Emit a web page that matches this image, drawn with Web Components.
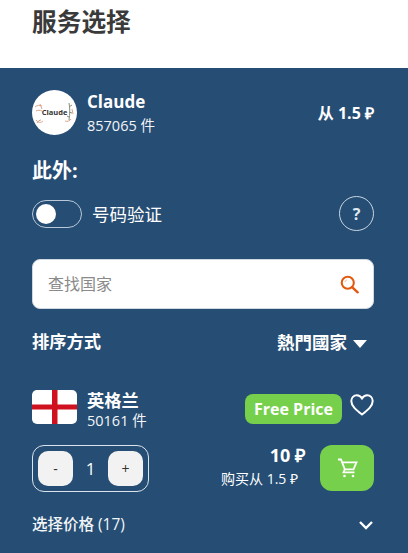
<!DOCTYPE html>
<html lang="zh">
<head>
<meta charset="utf-8">
<title>服务选择</title>
<style>
  html, body {
    margin: 0;
    height: 553px;
    overflow: hidden;
    background: #264d73;
    font-family: "Open Sans", "Noto Sans CJK SC", sans-serif;
  }
</style>
</head>
<body>
<service-page></service-page>

<script>
const FONT = '"Open Sans", "Noto Sans CJK SC", sans-serif';

// white title bar
class PageTitle extends HTMLElement {
    constructor() {
        super();
        this.attachShadow({ mode: 'open' });
        this.shadowRoot.innerHTML = `
            <style>
              :host { display: block; height: 68px; background: #fff; padding: 0 32px; box-sizing: border-box; }
              h1 { margin: 0; padding-top: 6px; font: 700 24.7px/32px ${FONT}; color: #3a3a3a; }
            </style>
            <h1><slot></slot></h1>
        `;
    }
}

// service row with logo, name, count and start price
class ServiceRow extends HTMLElement {
    constructor() {
        super();
        this.attachShadow({ mode: 'open' });
        this.shadowRoot.innerHTML = `
            <style>
              :host { display: flex; align-items: center; height: 45px; }
              .logo { width: 45px; height: 45px; flex: none; }
              .info { margin-left: 10px; flex: 1; padding-top: 4px; }
              .name { font: 700 17px/22px ${FONT}; color: #fff; }
              .count { font: 400 14.500px/25px ${FONT}; color: #f2f5f8; }
              .price { font: 700 16px/22px ${FONT}; color: #fff; }
            </style>
            <svg class="logo" viewBox="0 0 45 45" aria-hidden="true">
              <circle cx="22.5" cy="22.5" r="22.5" fill="#fff"/>
              <g fill="none" stroke-width="1">
                <path d="M3 17c2-2 5-2 7-1M4 21c2-1 4-1 6 0M8 14l2 5M4 30c2 3 5 3 7 1M5 33c1-2 3-3 4-3" stroke="#d9a58f"/>
                <path d="M37 13c1 5 1 11 0 17M37 17l3-2M37 22l3 1M37 27l-2-1" stroke="#8a8f7c"/>
                <path d="M33 31c2 1 5 0 6-2M40 19l1 5" stroke="#d9a58f"/>
              </g>
              <text x="22.5" y="25" text-anchor="middle" font-family="Open Sans, sans-serif" font-size="7.5" font-weight="700" fill="#333">Claude</text>
            </svg>
            <div class="info">
              <div class="name"><slot name="name"></slot></div>
              <div class="count"><slot name="count"></slot></div>
            </div>
            <div class="price"><slot name="price"></slot></div>
        `;
    }
}

// switch with a label and the help button at the far side
class ToggleRow extends HTMLElement {
    constructor() {
        super();
        this.attachShadow({ mode: 'open' });
        this.shadowRoot.innerHTML = `
            <style>
              :host { display: flex; align-items: center; height: 35px; }
              .track {
                width: 50px; height: 28px; box-sizing: border-box; flex: none;
                border: 1px solid #b9c9d9; border-radius: 14px;
                display: flex; align-items: center; padding-left: 3px;
              }
              .knob { width: 20px; height: 20px; border-radius: 50%; background: #fff; }
              .label { margin-left: 10px; flex: 1; font: 400 17.5px/24px ${FONT}; color: #fff; }
              .help {
                width: 35px; height: 35px; box-sizing: border-box; flex: none;
                border: 1px solid #c9d6e3; border-radius: 50%;
                display: flex; align-items: center; justify-content: center;
                font: 700 16px/1 ${FONT}; color: #dfe8f1;
              }
            </style>
            <span class="track"><span class="knob"></span></span>
            <span class="label"><slot></slot></span>
            <span class="help">?</span>
        `;
    }
}

class SearchBox extends HTMLElement {
    constructor() {
        super();
        this.attachShadow({ mode: 'open' });
        this.shadowRoot.innerHTML = `
            <style>
              :host {
                display: flex; align-items: center; height: 50px; box-sizing: border-box;
                background: #fff; border-radius: 8px; border: 1px solid #cfd8e1;
                padding: 0 14px 0 15px;
              }
              .hint { flex: 1; font: 400 16px/22px ${FONT}; color: #8a8a8a; }
              svg { width: 19px; height: 19px; display: block; }
            </style>
            <span class="hint"><slot></slot></span>
            <svg viewBox="0 0 22 22" fill="none" stroke="#e2590f" aria-hidden="true">
              <circle cx="9" cy="9" r="7" stroke-width="2.400"/>
              <path d="M14 14l6.500 6" stroke-width="2.800" stroke-linecap="round"/>
              <path d="M5.600 8.200c.3-1.400 1.300-2.300 2.600-2.600" stroke="#f2b48f" stroke-width="1"/>
            </svg>
        `;
    }
}

class SortRow extends HTMLElement {
    constructor() {
        super();
        this.attachShadow({ mode: 'open' });
        this.shadowRoot.innerHTML = `
            <style>
              :host { display: flex; align-items: center; height: 24px; }
              .label { flex: 1; font: 700 17.3px/24px ${FONT}; color: #fff; }
              .value { font: 700 17.5px/24px ${FONT}; color: #fff; }
              .caret {
                margin: 4px 7px 0 6px; width: 0; height: 0;
                border-left: 7.500px solid transparent; border-right: 7.500px solid transparent;
                border-top: 8px solid #fff;
              }
            </style>
            <span class="label"><slot name="label"></slot></span>
            <span class="value"><slot name="value"></slot></span>
            <span class="caret"></span>
        `;
    }
}

// country card: flag, name, badge, heart, quantity and buy button
class CountryItem extends HTMLElement {
    constructor() {
        super();
        this.attachShadow({ mode: 'open' });
        this.shadowRoot.innerHTML = `
            <style>
              :host { display: block; }
              .top { display: flex; align-items: center; height: 36px; }
              .flag { width: 45px; height: 34px; flex: none; border-radius: 5px; display: block; }
              .info { margin-left: 10px; flex: 1; padding-top: 6px; }
              .name { font: 700 17.3px/22px ${FONT}; color: #fff; }
              .count { font: 400 14.500px/18px ${FONT}; color: #f2f5f8; }
              .badge {
                width: 97px; height: 30px; border-radius: 8px; background: #76d04b;
                display: flex; align-items: center; justify-content: center;
                font: 700 16px/1 ${FONT}; color: #fff; margin-top: 4px;
              }
              .heart { width: 24px; height: 22px; margin-left: 8px; margin-top: -4px; display: block; }
              .bottom { display: flex; align-items: flex-start; margin-top: 20px; }
              .stepper {
                width: 117px; height: 47px; box-sizing: border-box; flex: none;
                border: 1px solid #dbe4ec; border-radius: 12px;
                display: flex; align-items: center; justify-content: space-between; padding: 0 5px;
              }
              .step {
                width: 35px; height: 35px; border-radius: 10px; background: #f2f2f2;
                display: flex; align-items: center; justify-content: center;
                font: 400 14px/1 ${FONT}; color: #333;
              }
              .qty { font: 400 17px/1 ${FONT}; color: #fff; }
              .prices { flex: 1; text-align: right; margin-right: 15px; }
              .amount { font: 700 18px/20px ${FONT}; color: #fff; }
              .from { font: 400 14px/20px ${FONT}; color: #fff; margin-top: 4px; margin-right: 7px; }
              .cart {
                width: 54px; height: 46px; border-radius: 12px; background: #76d04b; flex: none;
                display: flex; align-items: center; justify-content: center;
              }
              .cart svg { width: 21px; height: 21px; display: block; }
            </style>
            <div class="top">
              <svg class="flag" viewBox="0 0 45 34" aria-hidden="true">
                <rect width="45" height="34" fill="#fff"/>
                <rect x="20" width="5.500" height="34" fill="#d0111f"/>
                <rect y="14.500" width="45" height="5" fill="#d0111f"/>
              </svg>
              <div class="info">
                <div class="name"><slot name="name"></slot></div>
                <div class="count"><slot name="count"></slot></div>
              </div>
              <div class="badge"><slot name="badge"></slot></div>
              <svg class="heart" viewBox="0 0 24 22" fill="none" stroke="#fff" stroke-width="2" aria-hidden="true">
                <path d="M12 20.500C6 15.800 1.300 12 1.300 7 1.300 3.700 3.800 1.300 6.800 1.300c2.100 0 4 1.100 5.200 3.100 1.200-2 3.100-3.100 5.200-3.100 3 0 5.500 2.400 5.500 5.700 0 5-4.700 8.800-10.700 13.500z"/>
              </svg>
            </div>
            <div class="bottom">
              <div class="stepper">
                <span class="step">-</span>
                <span class="qty">1</span>
                <span class="step">+</span>
              </div>
              <div class="prices">
                <div class="amount"><slot name="amount"></slot></div>
                <div class="from"><slot name="from"></slot></div>
              </div>
              <div class="cart">
                <svg viewBox="0 0 21 21" fill="none" stroke="#fff" stroke-width="1.800" aria-hidden="true">
                  <path d="M1 1.500h3l3.800 9.800h8.700l3-7H5.400"/>
                  <path d="M7.800 11.300l-1.300 3h11"/>
                  <circle cx="7.500" cy="18" r="1.300" fill="#fff" stroke="none"/>
                  <circle cx="16" cy="18" r="1.300" fill="#fff" stroke="none"/>
                </svg>
              </div>
            </div>
        `;
    }
}

class PriceFooter extends HTMLElement {
    constructor() {
        super();
        this.attachShadow({ mode: 'open' });
        this.shadowRoot.innerHTML = `
            <style>
              :host { display: flex; align-items: center; justify-content: space-between; height: 24px; }
              .label { font: 500 15.500px/24px ${FONT}; color: #f2f5f8; }
              svg { width: 16px; height: 10px; display: block; margin-top: 1px; }
            </style>
            <span class="label"><slot></slot></span>
            <svg viewBox="0 0 16 10" fill="none" stroke="#fff" stroke-width="2.400" aria-hidden="true">
              <path d="M2 2l6 6 6-6"/>
            </svg>
        `;
    }
}

// whole page
class ServicePage extends HTMLElement {
    constructor() {
        super();
        this.attachShadow({ mode: 'open' });
        this.shadowRoot.innerHTML = `
            <style>
              :host { display: block; font-family: ${FONT}; }
              main { background: #264d73; padding: 22px 34px 0 32px; height: 485px; box-sizing: border-box; }
              h2 { margin: 23px 0 0; font: 700 20px/26px ${FONT}; color: #fff; }
              toggle-row { margin-top: 12px; }
              search-box { margin-top: 28px; }
              sort-row { margin-top: 21px; }
              country-item { margin-top: 35px; }
              price-footer { margin-top: 20px; }
            </style>
            <page-title>服务选择</page-title>
            <main>
              <service-row>
                <span slot="name">Claude</span>
                <span slot="count">857065 件</span>
                <span slot="price">从 1.5 ₽</span>
              </service-row>
              <h2>此外:</h2>
              <toggle-row>号码验证</toggle-row>
              <search-box>查找国家</search-box>
              <sort-row>
                <span slot="label">排序方式</span>
                <span slot="value">熱門國家</span>
              </sort-row>
              <country-item>
                <span slot="name">英格兰</span>
                <span slot="count">50161 件</span>
                <span slot="badge">Free Price</span>
                <span slot="amount">10 ₽</span>
                <span slot="from">购买从 1.5 ₽</span>
              </country-item>
              <price-footer>选择价格 (17)</price-footer>
            </main>
        `;
    }
}

customElements.define('page-title', PageTitle);
customElements.define('service-row', ServiceRow);
customElements.define('toggle-row', ToggleRow);
customElements.define('search-box', SearchBox);
customElements.define('sort-row', SortRow);
customElements.define('country-item', CountryItem);
customElements.define('price-footer', PriceFooter);
customElements.define('service-page', ServicePage);
</script>
</body>
</html>
